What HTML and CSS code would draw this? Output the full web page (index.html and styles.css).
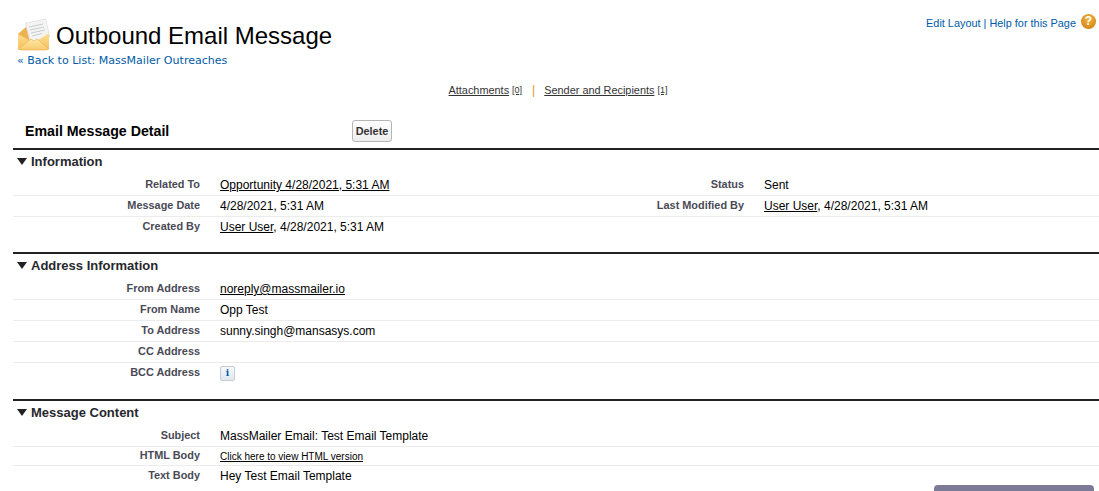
FILE: index.html
```html
<!DOCTYPE html>
<html lang="en">
<head>
<meta charset="utf-8">
<title>Outbound Email Message</title>
<link rel="stylesheet" href="styles.css">
</head>
<body>
<div class="page">
  <header class="page-header">
    <div class="title-block">
      <div class="title-line">
        <svg class="title-icon" viewBox="0 0 34 34" width="34" height="34" aria-hidden="true">
          <defs>
            <linearGradient id="env" x1="0" y1="0" x2="0" y2="1"><stop offset="0" stop-color="#fbe08f"/><stop offset="1" stop-color="#f6c160"/></linearGradient>
            <linearGradient id="flap" x1="0" y1="0" x2="0" y2="1"><stop offset="0" stop-color="#fdeaa8"/><stop offset="1" stop-color="#f8c96c"/></linearGradient>
          </defs>
          <path d="M1 16 L9 9 L26 7 L32 14 L32 28 Q32 32 28 32 L5 32 Q1 32 1 28 Z" fill="#eeb24f"/>
          <path d="M8 5 L29 0.5 L33 19 L13 25 Z" fill="#dfe0e2"/>
          <path d="M9 5.5 L28.5 1.5 L32 18 L14 23.5 Z" fill="#f4f4f3"/>
          <path d="M12 9 L26 6 M13 12 L27 9 M14 15 L28 12 M15 18 L25 15.5" stroke="#c9cbce" stroke-width="1" fill="none"/>
          <path d="M1 16 L17 25 L32 15 L32 28 Q32 32 28 32 L5 32 Q1 32 1 28 Z" fill="url(#env)"/>
          <path d="M1 31 L14 21 L17 23 L20 21 L32 31 L28 32 L5 32 Z" fill="url(#flap)" stroke="#eca94a" stroke-width=".6"/>
        </svg>
        <h1 class="page-title">Outbound Email Message</h1>
      </div>
      <div class="breadcrumb">« <a href="#">Back to List: MassMailer Outreaches</a></div>
    </div>
    <div class="help-links">
      <a href="#">Edit Layout</a> | <a href="#">Help for this Page</a>
      <span class="help-icon">?</span>
    </div>
  </header>

  <nav class="related-links">
    <a href="#" class="related-link">Attachments</a> <a href="#" class="count">[0]</a>
    <span class="sep">|</span>
    <a href="#" class="related-link">Sender and Recipients</a> <a href="#" class="count">[1]</a>
  </nav>

  <div class="detail-head">
    <h2 class="detail-title">Email Message Detail</h2>
    <button class="btn" type="button">Delete</button>
  </div>

  <section class="section sec-info">
    <h3 class="section-title"><span class="twist"></span>Information</h3>
    <div class="row">
      <div class="label">Related To</div><div class="value"><a href="#">Opportunity 4/28/2021, 5:31 AM</a></div>
      <div class="label">Status</div><div class="value">Sent</div>
    </div>
    <div class="row">
      <div class="label">Message Date</div><div class="value">4/28/2021, 5:31 AM</div>
      <div class="label">Last Modified By</div><div class="value"><a href="#">User User</a>, 4/28/2021, 5:31 AM</div>
    </div>
    <div class="row last">
      <div class="label">Created By</div><div class="value"><a href="#">User User</a>, 4/28/2021, 5:31 AM</div>
      <div class="label"></div><div class="value"></div>
    </div>
  </section>

  <section class="section sec-addr">
    <h3 class="section-title"><span class="twist"></span>Address Information</h3>
    <div class="row wide"><div class="label">From Address</div><div class="value"><a href="#">noreply@massmailer.io</a></div></div>
    <div class="row wide"><div class="label">From Name</div><div class="value">Opp Test</div></div>
    <div class="row wide"><div class="label">To Address</div><div class="value">sunny.singh@mansasys.com</div></div>
    <div class="row wide"><div class="label">CC Address</div><div class="value"></div></div>
    <div class="row wide last"><div class="label">BCC Address</div><div class="value"><span class="info-btn">i</span></div></div>
  </section>

  <section class="section sec-msg">
    <h3 class="section-title"><span class="twist"></span>Message Content</h3>
    <div class="row wide"><div class="label">Subject</div><div class="value">MassMailer Email: Test Email Template</div></div>
    <div class="row wide short"><div class="label">HTML Body</div><div class="value small"><a href="#">Click here to view HTML version</a></div></div>
    <div class="row wide last"><div class="label">Text Body</div><div class="value">Hey Test Email Template</div></div>
  </section>
</div>
<div class="floating-bar"></div>
</body>
</html>
```
FILE: styles.css
```css
html, body { margin: 0; padding: 0; height: 100%; overflow: hidden; background: #fff; }
body { font-family: "Liberation Sans", Arial, sans-serif; font-size: 12px; color: #000; }
a { color: inherit; }
.page { padding-left: 13px; }

.page-header { display: flex; justify-content: space-between; height: 76px; }
.title-block { padding: 18px 0 0 4px; }
.title-line { display: flex; align-items: center; gap: 5px; height: 34px; }
.title-icon { flex: none; }
.page-title { margin: 2px 0 0; font-size: 24px; font-weight: normal; line-height: 34px; white-space: nowrap; }
.breadcrumb { font-family: "DejaVu Sans", Verdana, sans-serif; font-size: 11.05px; line-height: 14px; margin-top: 1px; padding-top: 1px; color: #015ba7; }
.breadcrumb a { text-decoration: none; }
.help-links { display: flex; align-items: center; gap: 3px; height: 16px; margin: 15px 3px 0 0; font-size: 10.9px; color: #015ba7; }
.help-links a { text-decoration: none; }
.help-icon { width: 15px; height: 15px; margin: -3px 0 0 2px; border-radius: 50%; background: radial-gradient(circle at 50% 35%, #f4b53d, #c9790f); color: #fff; font-weight: bold; font-size: 12px; line-height: 15px; text-align: center; }

.related-links { display: flex; justify-content: center; align-items: center; gap: 3px; height: 28px; font-size: 10.9px; color: #333; padding-left: 4px; }
.related-link { text-decoration: underline; }
.count { font-size: 9px; text-decoration: underline; }
.sep { margin: 0 6px 0 7px; font-size: 12px; color: #e59a26; }

.detail-head { display: flex; align-items: center; height: 34px; padding-top: 10px; }
.detail-title { margin: 0 0 0 12px; width: 327px; font-size: 14.2px; font-weight: bold; }
.btn { width: 40px; height: 22px; padding: 0; border: 1px solid #b5b5b5; border-radius: 3px; background: linear-gradient(#fff, #eee); color: #333; font: bold 10.9px "Liberation Sans", Arial, sans-serif; }

.section { border-top: 2px solid #222; }
.sec-info { height: 102px; }
.sec-addr { height: 145px; }
.section-title { display: flex; align-items: center; height: 22px; margin: 0; font-size: 13px; font-weight: bold; color: #27282e; }
.twist { width: 0; height: 0; margin: 0 4px 0 4px; border-left: 5px solid transparent; border-right: 5px solid transparent; border-top: 7px solid #222; }

.row { display: grid; grid-template-columns: 187px 357px 187px 1fr; align-items: center; height: 20px; border-bottom: 1px solid #ececec; }
.row.wide { grid-template-columns: 187px 1fr; }
.row.short { height: 18px; }
.row.last { border-bottom: none; }
.section-title + .row { margin-top: 3px; }
.label { padding-bottom: 2px; text-align: right; font-size: 10.9px; font-weight: bold; color: #4a4a56; }
.value { padding-left: 20px; }
.value.small { font-size: 10px; }
.info-btn { display: inline-block; width: 13px; height: 13px; margin-top: 1px; border: 1px solid #c5ccd3; border-radius: 2px; background: linear-gradient(#f6f9fc, #dfe7ef); color: #015ba7; font: bold 9px/13px "DejaVu Serif", serif; text-align: center; }

.floating-bar { position: fixed; left: 934px; top: 485px; width: 160px; height: 30px; border-radius: 4px 4px 0 0; background: #7b7b98; }
```
